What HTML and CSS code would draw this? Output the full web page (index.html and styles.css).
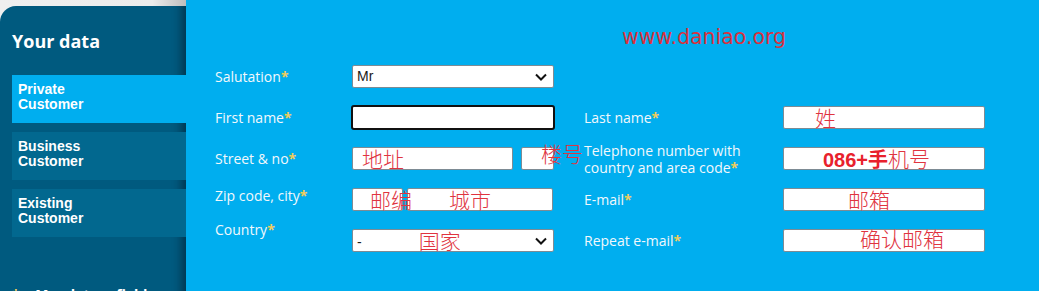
FILE: index.html
```html
<!DOCTYPE html>
<html lang="en">
<head>
<meta charset="utf-8">
<title>Your data</title>
<link rel="stylesheet" href="styles.css">
</head>
<body>
<div class="page">
  <aside class="sidebar">
    <div class="sidebar__panel">
      <h2 class="sidebar__title">Your data</h2>
      <nav class="nav">
        <a class="nav__item nav__item--active">Private<br>Customer</a>
        <a class="nav__item">Business<br>Customer</a>
        <a class="nav__item">Existing<br>Customer</a>
      </nav>
      <p class="mandatory"><span class="req">*</span> Mandatory fields</p>
    </div>
  </aside>
  <main class="main">
    <div class="site-mark">www.daniao.org</div>
    <form class="form">
      <label class="label">Salutation<span class="req">*</span></label>
      <div class="field select">
        <span class="select__value">Mr</span>
        <svg class="chevron" width="12" height="8" viewBox="0 0 12 8"><path d="M1 1.5 L6 6.5 L11 1.5" fill="none" stroke="#111" stroke-width="2"/></svg>
      </div>
      <div></div>
      <div></div>

      <label class="label">First name<span class="req">*</span></label>
      <div class="field field--focus"></div>
      <label class="label label--right">Last name<span class="req">*</span></label>
      <div class="field"><span class="note note--last">姓</span></div>

      <label class="label">Street &amp; no<span class="req">*</span></label>
      <div class="pair pair--street">
        <div class="field field--street"><span class="note note--street">地址</span></div>
        <div class="field field--house"><span class="note note--house">楼号</span></div>
      </div>
      <label class="label label--right">Telephone number with<br>country and area code<span class="req">*</span></label>
      <div class="field"><span class="note note--phone"><b class="note__bold">086+手</b>机号</span></div>

      <label class="label label--zip">Zip code, city<span class="req">*</span></label>
      <div class="pair pair--zip">
        <div class="field field--zip"><span class="note note--zip">邮编</span></div>
        <div class="field field--city"><span class="note note--city">城市</span></div>
      </div>
      <label class="label label--right">E-mail<span class="req">*</span></label>
      <div class="field"><span class="note note--email">邮箱</span></div>

      <label class="label label--country">Country<span class="req">*</span></label>
      <div class="field select">
        <span class="select__value select__value--dash">-</span>
        <span class="note note--country">国家</span>
        <svg class="chevron" width="12" height="8" viewBox="0 0 12 8"><path d="M1 1.5 L6 6.5 L11 1.5" fill="none" stroke="#111" stroke-width="2"/></svg>
      </div>
      <label class="label label--right">Repeat e-mail<span class="req">*</span></label>
      <div class="field"><span class="note note--repeat">确认邮箱</span></div>
    </form>
  </main>
</div>
</body>
</html>
```

FILE: styles.css
```css
html, body {
  margin: 0;
  padding: 0;
  height: 100%;
}

body {
  background: #00aeef;
  font-family: "Open Sans", "DejaVu Sans", sans-serif;
  overflow: hidden;
}

.page {
  display: flex;
  height: 291px;
}

/* ---------- sidebar ---------- */
.sidebar {
  width: 186px;
  flex: none;
  padding-top: 6px;
  background: linear-gradient(to right, #efefef 0%, #ececec 82%, #bdbdbd 100%);
  display: flex;
  flex-direction: column;
}

.sidebar__panel {
  flex: 1;
  background: #005a7f;
  border-top-left-radius: 16px;
  box-shadow: inset -12px 0 10px -8px rgba(0, 20, 35, 0.55);
  padding-top: 23px;
}

.sidebar__title {
  margin: 0 0 22px 12px;
  font-family: "Open Sans", sans-serif;
  font-weight: 700;
  font-size: 18px;
  line-height: 24px;
  color: #ffffff;
}

.nav {
  display: flex;
  flex-direction: column;
  gap: 9px;
  margin-left: 12px;
}

.nav__item {
  display: block;
  height: 48px;
  box-sizing: border-box;
  padding: 7px 0 0 6px;
  background: #02688f;
  color: #ffffff;
  font-family: "Liberation Sans", Arial, sans-serif;
  font-weight: 700;
  font-size: 14px;
  line-height: 15px;
}

.nav__item--active {
  background: #00aeef;
}

.mandatory {
  margin: 49px 0 0 12px;
  color: #ffffff;
  font-weight: 700;
  font-size: 14px;
  line-height: 17px;
}

.req {
  color: #f3cd5a;
  font-weight: 700;
}

.mandatory .req {
  margin-right: 12px;
}

/* ---------- main ---------- */
.main {
  flex: 1;
  background: #00aeef;
  padding: 25px 0 0 29px;
}

.site-mark {
  padding-left: 407px;
  font-family: "DejaVu Sans", sans-serif;
  font-size: 20.5px;
  line-height: 24px;
  color: #d8323e;
  margin-bottom: 16px;
}

.form {
  display: grid;
  grid-template-columns: 137px 202px 229px 202px;
  grid-auto-rows: 23px;
  row-gap: 18px;
  align-items: center;
}

.label {
  color: #f2f8fc;
  font-size: 14px;
  line-height: 17px;
  align-self: center;
}

.label--right {
  padding-left: 30px;
}

.label--zip {
  align-self: start;
  margin-top: -1px;
}

.label--country {
  align-self: start;
  margin-top: -8px;
}

.field {
  box-sizing: border-box;
  height: 23px;
  background: #ffffff;
  border: 1px solid #7d8b94;
  border-radius: 2px;
  white-space: nowrap;
  line-height: 21px;
}

.field--focus {
  height: 25px;
  margin: 0 -1px;
  border: 2px solid #111111;
  border-radius: 3px;
}

.pair {
  display: flex;
  height: 23px;
}

.pair--street {
  gap: 8px;
}

.field--street {
  width: 161px;
}

.field--house {
  width: 33px;
}

.pair--zip {
  gap: 4px;
}

.field--zip {
  width: 51px;
}

.field--city {
  width: 146px;
}

.select {
  display: flex;
  align-items: center;
  padding: 0 6px 0 4px;
}

.select__value {
  font-family: "Liberation Sans", Arial, sans-serif;
  font-size: 14px;
  color: #1a1a1a;
}

.select__value--dash {
  padding-top: 4px;
}

.chevron {
  margin-left: auto;
  flex: none;
}

/* red watermark notes over the inputs */
.note {
  position: relative;
  display: inline-block;
  font-family: "Noto Sans CJK SC", sans-serif;
  font-weight: 300;
  font-size: 21px;
  line-height: 21px;
  color: #e0343f;
  white-space: nowrap;
}

.note__bold {
  font-family: "Liberation Sans", "Noto Sans CJK SC", sans-serif;
  font-weight: 700;
  font-size: 20px;
  color: #e8212c;
}

.note--last { margin-left: 31px; }
.note--street { margin-left: 9px; }
.note--house { margin-left: 19px; top: -5px; }
.note--zip { margin-left: 17px; }
.note--city { margin-left: 41px; }
.note--country { margin-left: 57px; }
.note--phone { margin-left: 39px; }
.note--email { margin-left: 64px; }
.note--repeat { margin-left: 76px; top: -2px; }
```
